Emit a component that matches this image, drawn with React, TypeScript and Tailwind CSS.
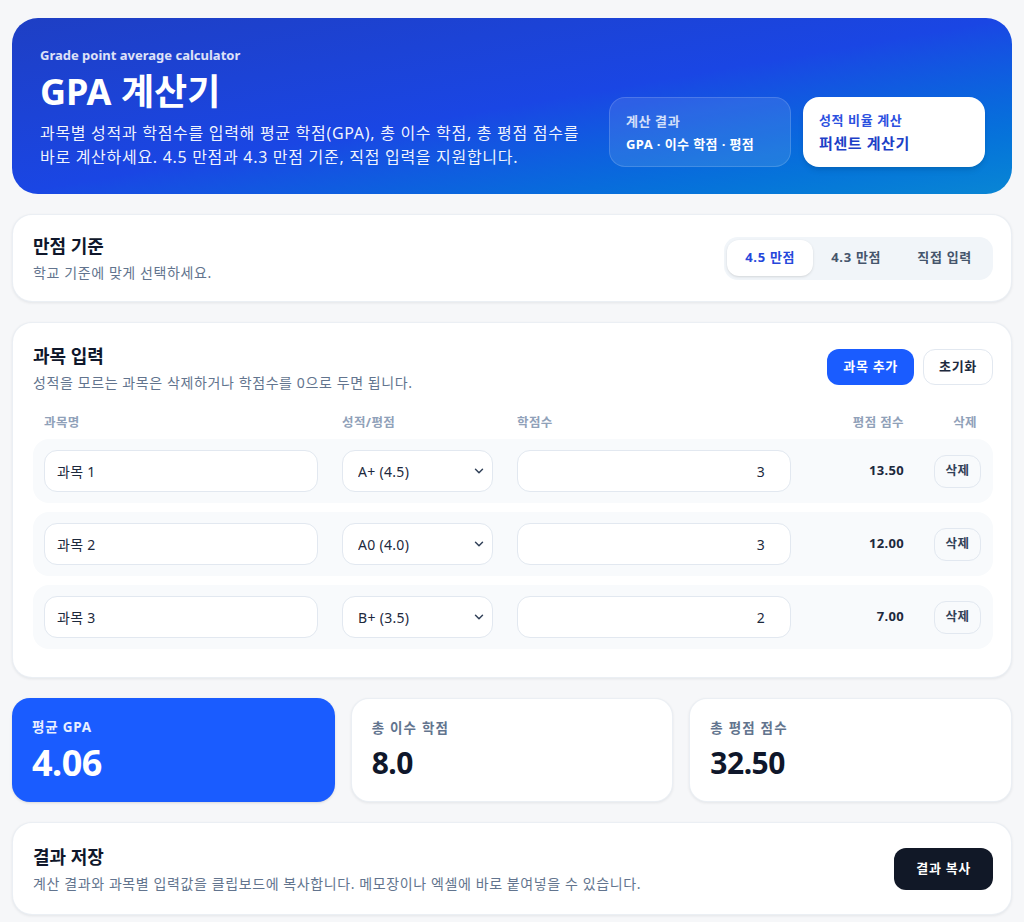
import { useState } from "react";
import { ChevronDown } from "lucide-react";

const font = { fontFamily: '"Noto Sans", "Noto Sans CJK KR", sans-serif' };

const grades = [
  { label: "A+ (4.5)", value: 4.5 },
  { label: "A0 (4.0)", value: 4.0 },
  { label: "B+ (3.5)", value: 3.5 },
  { label: "B0 (3.0)", value: 3.0 },
  { label: "C+ (2.5)", value: 2.5 },
  { label: "C0 (2.0)", value: 2.0 },
  { label: "D+ (1.5)", value: 1.5 },
  { label: "D0 (1.0)", value: 1.0 },
  { label: "F (0.0)", value: 0 },
];

const App = () => {
  const [scale, setScale] = useState("4.5");
  const [rows, setRows] = useState([
    { id: 1, name: "과목 1", grade: 4.5, credits: "3" },
    { id: 2, name: "과목 2", grade: 4.0, credits: "3" },
    { id: 3, name: "과목 3", grade: 3.5, credits: "2" },
  ]);

  const totalCredits = rows.reduce((s, r) => s + (parseFloat(r.credits) || 0), 0);
  const totalPoints = rows.reduce((s, r) => s + r.grade * (parseFloat(r.credits) || 0), 0);
  const gpa = totalCredits ? totalPoints / totalCredits : 0;

  const update = (id: number, patch: any) => setRows(rows.map((r) => (r.id === id ? { ...r, ...patch } : r)));

  const inputCls = "w-full h-[42px] bg-white border border-slate-200 rounded-[13px] text-[14px] tracking-[0.3px] text-slate-800 focus:outline-none";
  const cardCls = "bg-white border border-slate-200/70 rounded-[20px] shadow-[0_1px_3px_rgba(15,23,42,0.08)]";
  const titleCls = "text-[18px] leading-[26px] font-bold text-slate-900";
  const descCls = "mt-[4px] text-[14px] leading-[20px] tracking-[0.6px] text-slate-500";

  return (
    <div className="min-h-screen bg-[#f6f7f9] px-3 pt-[18px] pb-6" style={font}>
      <div className="flex flex-col gap-5">
        {/* Hero */}
        <div className="h-[176px] rounded-[26px] bg-gradient-to-br from-[#1e3fc4] via-[#1a46e4] to-[#0a86d4] pl-[28px] pr-[27px] pt-[27px] pb-[27px] flex items-start justify-between">
          <div>
            <p className="text-[13px] leading-[20px] font-bold text-white/85">Grade point average calculator</p>
            <h1 className="mt-[7px] text-[36px] leading-[40px] font-bold text-white">GPA 계산기</h1>
            <p className="mt-[9px] text-[16px] leading-[24px] tracking-[0.7px] text-white/95 max-w-[548px]">
              과목별 성적과 학점수를 입력해 평균 학점(GPA), 총 이수 학점, 총 평점 점수를 바로 계산하세요. 4.5 만점과 4.3 만점 기준, 직접 입력을 지원합니다.
            </p>
          </div>
          <div className="flex gap-3 shrink-0 self-end">
            <div className="w-[182px] h-[70px] rounded-2xl bg-white/10 border border-white/15 px-4 flex flex-col justify-center gap-[3px]">
              <p className="text-[13px] leading-[20px] tracking-[0.6px] font-semibold text-white/80">계산 결과</p>
              <p className="text-[13px] leading-[20px] tracking-[0.4px] font-bold text-white">GPA · 이수 학점 · 평점</p>
            </div>
            <div className="w-[182px] h-[70px] rounded-2xl bg-white shadow-md px-4 flex flex-col justify-center gap-[2px]">
              <p className="text-[13px] leading-[20px] tracking-[0.6px] font-semibold text-[#2b50e0]">성적 비율 계산</p>
              <p className="text-[15px] leading-[22px] tracking-[0.6px] font-bold text-[#1d3fc7]">퍼센트 계산기</p>
            </div>
          </div>
        </div>

        {/* Scale */}
        <div className={`${cardCls} h-[88px] pl-5 pr-[18px] flex items-center justify-between`}>
          <div>
            <h2 className={titleCls}>만점 기준</h2>
            <p className={descCls}>학교 기준에 맞게 선택하세요.</p>
          </div>
          <div className="flex items-center bg-slate-100 rounded-[14px] p-[3px] h-[43px]">
            {[
              { k: "4.5", t: "4.5 만점" },
              { k: "4.3", t: "4.3 만점" },
              { k: "custom", t: "직접 입력" },
            ].map((o) => (
              <button
                key={o.k}
                onClick={() => setScale(o.k)}
                className={`h-[36px] px-[18px] rounded-xl text-[13px] tracking-[0.7px] font-bold ${scale === o.k ? "bg-white text-[#2647db] shadow-sm" : "text-slate-600"}`}
              >
                {o.t}
              </button>
            ))}
          </div>
        </div>

        {/* Subjects */}
        <div className={`${cardCls} pl-5 pr-[18px] pt-5 pb-7`}>
          <div className="flex items-start justify-between">
            <div>
              <h2 className={titleCls}>과목 입력</h2>
              <p className={descCls}>성적을 모르는 과목은 삭제하거나 학점수를 0으로 두면 됩니다.</p>
            </div>
            <div className="flex items-center gap-[9px] mt-[6px]">
              <button
                onClick={() => setRows([...rows, { id: Date.now(), name: `과목 ${rows.length + 1}`, grade: 4.5, credits: "3" }])}
                className="h-9 px-4 rounded-xl bg-[#1a5cff] text-white text-[13px] tracking-[0.7px] font-bold"
              >
                과목 추가
              </button>
              <button className="h-9 px-[15px] rounded-xl bg-white border border-slate-200 text-slate-800 text-[13px] tracking-[0.7px] font-bold">초기화</button>
            </div>
          </div>

          <div className="mt-[22px] grid grid-cols-[274px_151px_274px_1fr_47px] gap-x-6 pl-[11px] pr-3 text-[12.5px] leading-4 tracking-[0.4px] font-bold text-slate-400">
            <span>과목명</span>
            <span>성적/평점</span>
            <span>학점수</span>
            <span className="text-right pr-[6px]">평점 점수</span>
            <span className="text-right pr-1">삭제</span>
          </div>

          <div className="mt-2 flex flex-col gap-[9px]">
            {rows.map((r) => (
              <div key={r.id} className="grid grid-cols-[274px_151px_274px_1fr_47px] gap-x-6 items-center bg-slate-50 rounded-2xl pl-[11px] pr-3 h-16">
                <input value={r.name} onChange={(e) => update(r.id, { name: e.target.value })} className={`${inputCls} px-3`} />
                <div className="relative">
                  <select
                    value={r.grade}
                    onChange={(e) => update(r.id, { grade: parseFloat(e.target.value) })}
                    className={`${inputCls} appearance-none pl-[15px] pr-8`}
                  >
                    {grades.map((g) => (
                      <option key={g.label} value={g.value}>{g.label}</option>
                    ))}
                  </select>
                  <ChevronDown className="absolute right-[7px] top-1/2 -translate-y-1/2 w-[14px] h-[14px] text-slate-700 pointer-events-none" strokeWidth={2.5} />
                </div>
                <input value={r.credits} onChange={(e) => update(r.id, { credits: e.target.value })} className={`${inputCls} text-right pr-[25px]`} />
                <span className="text-right pr-[6px] text-[13px] tracking-[0.3px] font-bold text-slate-800">
                  {(r.grade * (parseFloat(r.credits) || 0)).toFixed(2)}
                </span>
                <button onClick={() => setRows(rows.filter((x) => x.id !== r.id))} className="h-[33px] w-[47px] rounded-xl bg-slate-50 border border-slate-200 text-[12.5px] tracking-[0.4px] font-bold text-slate-700">
                  삭제
                </button>
              </div>
            ))}
          </div>
        </div>

        {/* Stats */}
        <div className="grid grid-cols-3 gap-4">
          <div className="h-[104px] rounded-[18px] bg-[#1a5cff] px-5 pt-5 shadow-sm">
            <p className="text-[13.5px] leading-[18px] tracking-[0.8px] font-bold text-white/90">평균 GPA</p>
            <p className="mt-[5px] text-[36px] leading-[44px] tracking-[-0.5px] font-bold text-white">{gpa.toFixed(2)}</p>
          </div>
          <div className={`${cardCls} !rounded-[18px] h-[104px] px-5 pt-5`}>
            <p className="text-[13.5px] leading-[18px] tracking-[1.2px] font-bold text-slate-500">총 이수 학점</p>
            <p className="mt-[6px] text-[30px] leading-[40px] tracking-[-0.5px] font-bold text-slate-900">{totalCredits.toFixed(1)}</p>
          </div>
          <div className={`${cardCls} !rounded-[18px] h-[104px] px-5 pt-5`}>
            <p className="text-[13.5px] leading-[18px] tracking-[1.2px] font-bold text-slate-500">총 평점 점수</p>
            <p className="mt-[6px] text-[30px] leading-[40px] tracking-[-0.5px] font-bold text-slate-900">{totalPoints.toFixed(2)}</p>
          </div>
        </div>

        {/* Save */}
        <div className={`${cardCls} h-[93px] pl-5 pr-[18px] flex items-center justify-between`}>
          <div>
            <h2 className={titleCls}>결과 저장</h2>
            <p className={descCls}>계산 결과와 과목별 입력값을 클립보드에 복사합니다. 메모장이나 엑셀에 바로 붙여넣을 수 있습니다.</p>
          </div>
          <button className="h-[42px] px-[22px] rounded-xl bg-[#111827] text-white text-[13px] tracking-[0.7px] font-bold">결과 복사</button>
        </div>
      </div>
    </div>
  );
};

export default App;
